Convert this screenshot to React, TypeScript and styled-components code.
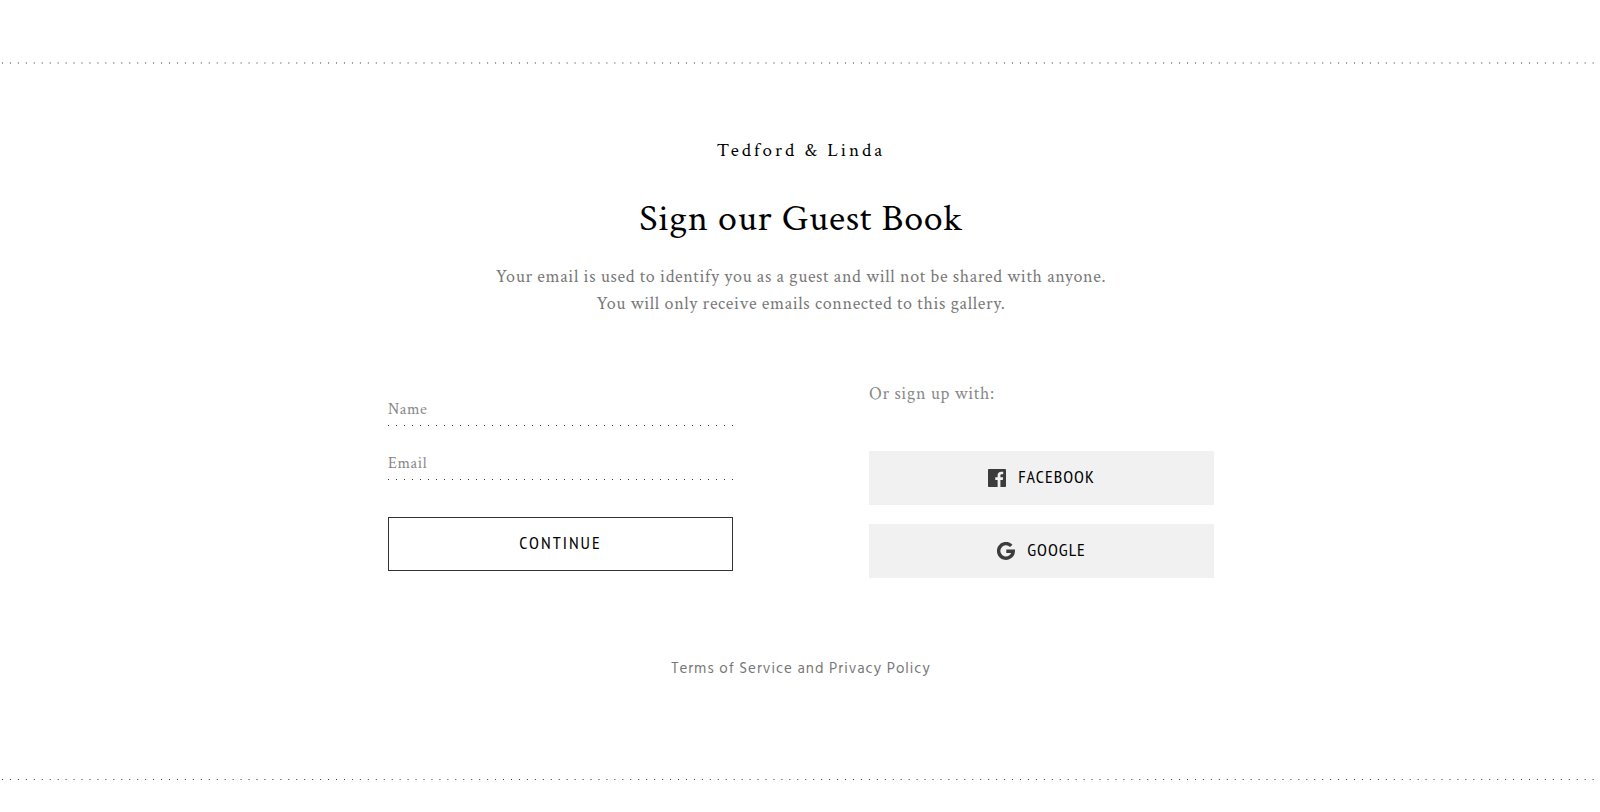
import React from "react";
import styled, { createGlobalStyle } from "styled-components";

const serif = `"Crimson Text", "Liberation Serif", "Times New Roman", serif`;
const narrow = `"PT Sans Narrow", "Liberation Sans Narrow", "Noto Sans", sans-serif`;
const sans = `"Hind", "Noto Sans", sans-serif`;

const GlobalStyle = createGlobalStyle`
  *, *::before, *::after { box-sizing: border-box; }
  body { margin: 0; background: #fff; color: #000; font-family: ${serif}; }
`;

const Page = styled.div`
  padding: 62px 0 32px;
`;

const DottedRule = styled.hr<{ $tone: string; $weight: number }>`
  height: ${(p) => p.$weight}px;
  margin: 0;
  border: 0;
  background: linear-gradient(90deg, transparent 2px, ${(p) => p.$tone} 2px, ${(p) => p.$tone} 3px, transparent 3px)
    0 0 / calc(100% / 201) 100%;
`;

const Main = styled.main`
  display: flex;
  flex-direction: column;
  align-items: center;
  padding: 71px 24px 98px 26px;
`;

const Couple = styled.p`
  margin: 0 0 32px;
  font-size: 19px;
  line-height: 32px;
  letter-spacing: 3px;
`;

const Title = styled.h1`
  margin: 0 0 24px;
  font-size: 38px;
  font-weight: 400;
  line-height: 40px;
  letter-spacing: 0.02em;
`;

const Note = styled.p`
  margin: 0;
  color: #777;
  font-size: 18px;
  line-height: 27px;
  letter-spacing: 0.035em;
  text-align: center;
`;

const Columns = styled.div`
  display: grid;
  grid-template-columns: 1fr 1fr;
  gap: 136px;
  width: 100%;
  max-width: 826px;
  margin-top: 63px;
`;

const Form = styled.form`
  display: flex;
  flex-direction: column;
  padding-top: 4px;
`;

const Field = styled.input`
  width: 100%;
  height: 42px;
  margin-bottom: 12px;
  padding: 9px 0 1px;
  border: 0;
  border-radius: 0;
  outline: none;
  background: linear-gradient(90deg, #333 1px, transparent 1px) 0 100% / 8px 1px repeat-x;
  color: #000;
  font: 16px/24px ${serif};
  letter-spacing: 0.035em;
  &::placeholder { color: #888; opacity: 1; }
`;

const Button = styled.button<{ $outlined?: boolean }>`
  display: flex;
  align-items: center;
  justify-content: center;
  gap: 12px;
  width: 100%;
  height: 54px;
  padding: 0;
  border: ${(p) => (p.$outlined ? "1px solid #333" : "0")};
  border-radius: 0;
  background: ${(p) => (p.$outlined ? "#fff" : "#f1f1f1")};
  color: #000;
  font: 18px/24px ${narrow};
  letter-spacing: ${(p) => (p.$outlined ? 2 : 1)}px;
  text-transform: uppercase;
  cursor: pointer;
`;

const ButtonLabel = styled.span`
  padding-bottom: 3px;
`;

const Submit = styled(Button)`
  margin-top: 25px;
`;

const Social = styled.div`
  display: flex;
  flex-direction: column;
  gap: 19px;
`;

const SocialHeading = styled(Note)`
  margin-bottom: 25px;
  color: #888;
  text-align: left;
`;

const Icon = styled.svg`
  width: 18px;
  height: 18px;
  color: #3c3c3c;
`;

const Legal = styled.a`
  margin-top: 79px;
  color: #777;
  font: 15px/24px ${sans};
  letter-spacing: 1px;
  text-decoration: none;
`;

export default function App() {
  return (
    <Page>
      <GlobalStyle />
      <DottedRule $tone="#999" $weight={2} />
      <Main>
        <Couple>Tedford &amp; Linda</Couple>
        <Title>Sign our Guest Book</Title>
        <Note>
          Your email is used to identify you as a guest and will not be shared with anyone.
          <br />
          You will only receive emails connected to this gallery.
        </Note>
        <Columns>
          <Form onSubmit={(e) => e.preventDefault()}>
            <Field type="text" aria-label="Name" placeholder="Name" />
            <Field type="email" aria-label="Email" placeholder="Email" />
            <Submit type="submit" $outlined>
              <ButtonLabel>Continue</ButtonLabel>
            </Submit>
          </Form>
          <Social>
            <SocialHeading>Or sign up with:</SocialHeading>
            <Button type="button">
              <Icon viewBox="0 0 24 24" fill="currentColor" aria-hidden="true">
                <path d="M22.676 0H1.324C.593 0 0 .593 0 1.324v21.352C0 23.408.593 24 1.324 24h11.494v-9.294H9.689v-3.621h3.129V8.41c0-3.099 1.894-4.785 4.659-4.785 1.325 0 2.464.097 2.796.141v3.24h-1.921c-1.5 0-1.792.721-1.792 1.771v2.311h3.584l-.465 3.63H16.56V24h6.115c.733 0 1.325-.592 1.325-1.324V1.324C24 .593 23.408 0 22.676 0" />
              </Icon>
              <ButtonLabel>Facebook</ButtonLabel>
            </Button>
            <Button type="button">
              <Icon viewBox="0 0 24 24" fill="none" stroke="currentColor" strokeWidth="4.6" aria-hidden="true">
                <path d="M19 5.2A9.7 9.7 0 1 0 21.6 12.4H12.4" />
              </Icon>
              <ButtonLabel>Google</ButtonLabel>
            </Button>
          </Social>
        </Columns>
        <Legal href="#terms">Terms of Service and Privacy Policy</Legal>
      </Main>
      <DottedRule $tone="#333" $weight={1} />
    </Page>
  );
}
